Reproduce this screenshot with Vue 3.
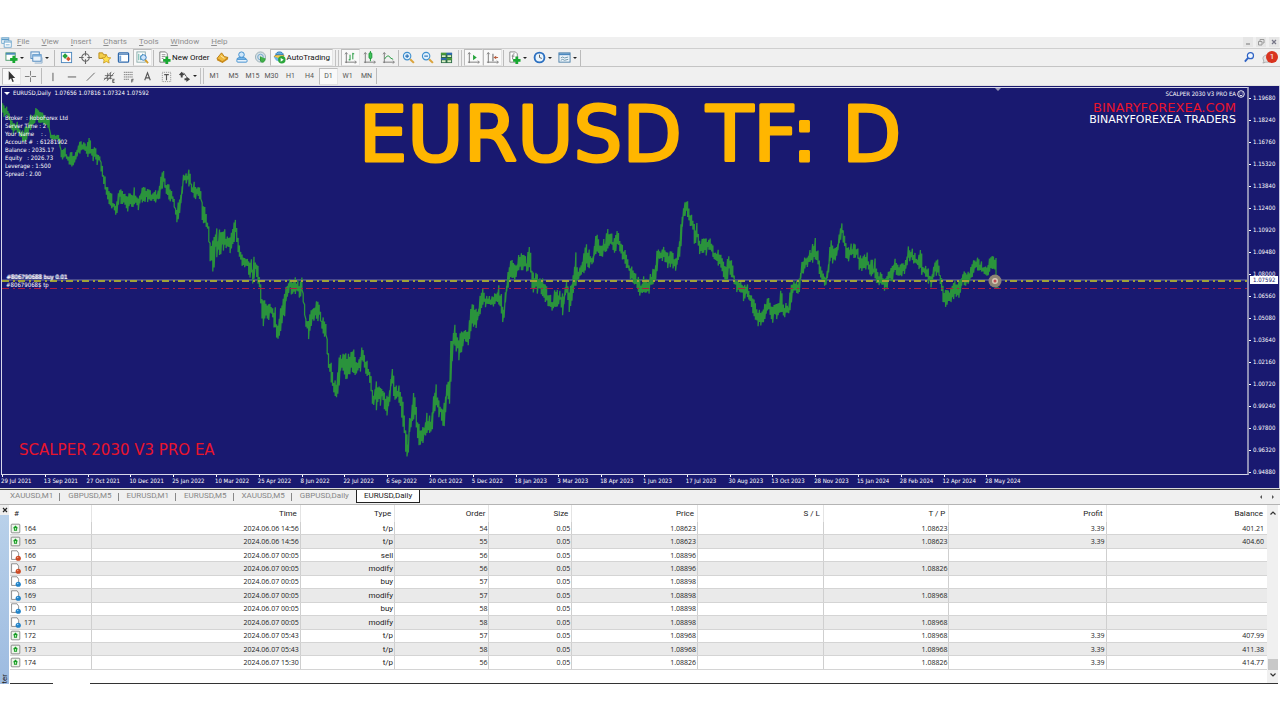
<script setup>
const icons = {
  appWindow: '<rect x="1" y="1" width="9" height="7" fill="#fff" stroke="#5b9bc8"/><path d="M1 3h9" stroke="#5b9bc8" stroke-width="2"/><rect x="4" y="5" width="9" height="8" fill="#fff" stroke="#5b9bc8"/><path d="M4 6.500h9M6 10h5" stroke="#5b9bc8"/>',
  addChart: '<rect x="1" y="2" width="10" height="8" fill="#fff" stroke="#4a9a6a"/><path d="M1 3h10" stroke="#4a8ab8" stroke-width="2"/><path d="M9.500 5v8M5.500 9h8" stroke="#19a832" stroke-width="3"/>',
  profiles: '<rect x="1" y="1" width="9" height="7" fill="#e8f2fb" stroke="#4b86bd"/><rect x="3" y="4" width="9" height="7" fill="#e8f2fb" stroke="#4b86bd"/><path d="M3 5h9" stroke="#7fb0dc" stroke-width="2"/><path d="M5 13h8V7" fill="none" stroke="#8fb0cf"/>',
  marketWatch: '<rect x="1.500" y="1.500" width="11" height="11" fill="#fdfdfd" stroke="#4b86bd"/><path d="M2.500 5.500l3-3 3 3-3 3z" fill="#2aa33c"/><path d="M6.500 8.500l2.500-2.500 2.500 2.500-2.500 2.500z" fill="#d9532c"/>',
  crosshair: '<circle cx="7" cy="7" r="4" fill="none" stroke="#666" stroke-width="1.200"/><path d="M7 0v5M7 9v5M0 7h5M9 7h5" stroke="#666" stroke-width="1.200"/>',
  folderStar: '<path d="M1 2h4l1 2h3v4H1z" fill="#f3cf4c" stroke="#b98a1c"/><path d="M9 4l1.500 3 3.300.400-2.400 2.200.600 3.400-3-1.700-3 1.700.600-3.400L4.200 7.400 7.500 7z" fill="#ffe14d" stroke="#c4921a" stroke-width=".8"/>',
  terminal: '<rect x="1.500" y="2" width="11" height="10" rx="1" fill="#fff" stroke="#2f69ac" stroke-width="1.300"/><path d="M2 3.500h10" stroke="#2f69ac" stroke-width="1"/><path d="M3.500 5v6" stroke="#6fa2d8" stroke-width="2"/>',
  tester: '<rect x="1" y="1" width="9" height="11" fill="#fff" stroke="#8aa"/><path d="M3 3v7M5 5v5M7 3v4" stroke="#5a9"/><circle cx="8" cy="7" r="3" fill="#cfe6fa" stroke="#2f79c0"/><path d="M10 9.500l3 3.500" stroke="#d59d2a" stroke-width="2"/>',
  newOrder: '<path d="M2 1h6l2 2v9H2z" fill="#fff" stroke="#777"/><path d="M4 4h4M4 6h4M4 8h2" stroke="#8a8a8a"/><path d="M9.500 6v8M5.500 10h8" stroke="#19a832" stroke-width="3"/>',
  metaEditor: '<path d="M1 8l5-6 3 4 4 1-6 5z" fill="#f0b93c" stroke="#b47a14"/><path d="M1 8l6 3 6-4v2l-6 4-6-3z" fill="#c98b1c"/><path d="M5 5l4 3" stroke="#fff3c0"/>',
  guru: '<circle cx="7" cy="4" r="3" fill="#cfe7fa" stroke="#3c8ccd"/><path d="M2 9c0-3 10-3 10 0z" fill="#8cc3ef" stroke="#3c8ccd"/><rect x="2" y="9" width="11" height="3" rx="1" fill="#e7f3fd" stroke="#3c8ccd"/>',
  signals: '<circle cx="7" cy="6.500" r="5.500" fill="#d5dfe4" stroke="#9bb0b8"/><circle cx="7" cy="6.500" r="3" fill="none" stroke="#6ea7d0"/><path d="M7 6v5c2 2 5 1 5-3" fill="#43b04a" stroke="#2c9838"/>',
  autoTrade: '<path d="M1 6l6-4 5 3-5 4z" fill="#f2c94c" stroke="#b98a1c"/><path d="M3 4c0-4 8-4 8 0z" fill="#65aee3" stroke="#2f79b5"/><path d="M1 6c1 4 3 5 6 5V8z" fill="#6db6e6"/><circle cx="9.500" cy="9.500" r="4" fill="#2ba63b"/><path d="M8.300 7.500v4l3.200-2z" fill="#fff"/>',
  bars: '<path d="M2.500 2v11M1 12h12" stroke="#777"/><path d="M1 3.500l1.500-2L4 3.500M11.500 10.500l2 1.500-2 1.500" fill="none" stroke="#777" stroke-width=".8"/><path d="M6.500 4v6M6.500 9.500H5M9.500 2v7M9.500 3H11" stroke="#189434"/>',
  candles: '<path d="M2.500 2v11M1 12h12" stroke="#777"/><path d="M1 3.500l1.500-2L4 3.500M11.500 10.500l2 1.500-2 1.500" fill="none" stroke="#777" stroke-width=".8"/><path d="M8 0v11" stroke="#189434"/><rect x="6.500" y="2" width="3" height="6" rx="1" fill="#42c35b" stroke="#189434"/>',
  line: '<path d="M2.500 2v11M1 12h12" stroke="#777"/><path d="M1 3.500l1.500-2L4 3.500M11.500 10.500l2 1.500-2 1.500" fill="none" stroke="#777" stroke-width=".8"/><path d="M3 8.500c2-4 5-4 6-1l3 1.500" fill="none" stroke="#189434"/>',
  zoomIn: '<circle cx="5.500" cy="5.500" r="4" fill="#dff0fc" stroke="#3f8fce" stroke-width="1.200"/><path d="M3.500 5.500h4M5.500 3.500v4" stroke="#2a6fb5" stroke-width="1.200"/><path d="M8.800 8.800l4 4" stroke="#dba43c" stroke-width="2.200"/>',
  zoomOut: '<circle cx="5.500" cy="5.500" r="4" fill="#dff0fc" stroke="#3f8fce" stroke-width="1.200"/><path d="M3.500 5.500h4" stroke="#2a6fb5" stroke-width="1.200"/><path d="M8.800 8.800l4 4" stroke="#dba43c" stroke-width="2.200"/>',
  tile: '<rect x="1" y="2" width="12" height="11" fill="#2c6a48"/><path d="M1 3h6M7 8.500h6" stroke="#4a9d38" stroke-width="2"/><path d="M7 3h6M1 8.500h6" stroke="#2d68b5" stroke-width="2"/><path d="M2 5.500h4M8 5.500h4M2 11h4M8 11h4" stroke="#d8f0c4" stroke-width="2"/>',
  autoScroll: '<path d="M2.500 2v11M1 12h12" stroke="#777"/><path d="M1 3.500l1.500-2L4 3.500M11.500 10.500l2 1.500-2 1.500" fill="none" stroke="#777" stroke-width=".8"/><path d="M6.500 4v6l4-3z" fill="#25a33b"/>',
  shift: '<path d="M2.500 2v11M1 12h12" stroke="#777"/><path d="M1 3.500l1.500-2L4 3.500M11.500 10.500l2 1.500-2 1.500" fill="none" stroke="#777" stroke-width=".8"/><path d="M7.500 3v8" stroke="#555"/><path d="M8 7l3-2v4z" fill="#b85a3a"/><path d="M10 7h3" stroke="#b85a3a"/>',
  indicators: '<path d="M2 1h6l2 2v9H2z" fill="#fff" stroke="#888"/><path d="M7 3c-2 0-2 1-2 6M4 5.500h3" fill="none" stroke="#777"/><path d="M9.500 6v8M5.500 10h8" stroke="#19a832" stroke-width="3"/>',
  clock: '<circle cx="7" cy="7" r="5.300" fill="#e8f4fd" stroke="#2a6fc0" stroke-width="2"/><path d="M7 4v3l2.500 1" fill="none" stroke="#555"/>',
  template: '<rect x="1" y="2" width="12" height="10" fill="#eef5fb" stroke="#4c7fa8"/><path d="M1 3.500h12" stroke="#4c88be" stroke-width="2"/><path d="M3 7.500l2-1 2 1 4-1M3 10l2-1 2 1 4-1" fill="none" stroke="#6a93a8"/>',
  cursor: '<path d="M4 1v10l2.500-2 1.500 4 1.500-.700L8 8.500h3z" fill="#333"/>',
  cross: '<path d="M7 1v5M7 8v5M1 7h5M8 7h5" stroke="#777"/>',
  vline: '<path d="M7.500 3v9" stroke="#555"/>',
  hline: '<path d="M3 7.500h9" stroke="#555"/>',
  trend: '<path d="M3 11.500L11.500 3" stroke="#666"/>',
  channel: '<path d="M1 11l8-9M4 12l8-9M2 6h9M1 9h9M5 3v8M8 3v7" stroke="#555" stroke-width=".8"/><path d="M12.500 10h-2v3.500h2M10.500 11.700h1.700" fill="none" stroke="#333" stroke-width=".8"/>',
  fibo: '<path d="M2 2.500h10M2 5h10M2 7.500h10M2 10h6" stroke="#777" stroke-dasharray="1.500 .5"/><path d="M12.500 10h-2v3.500M10.500 11.700h1.700" fill="none" stroke="#333" stroke-width=".8"/>',
  letter: '<path d="M4 11l3-8 3 8M5.200 8.500h3.600" fill="none" stroke="#555" stroke-width="1.200"/>',
  label: '<rect x="2.500" y="2.500" width="9" height="10" fill="none" stroke="#888" stroke-dasharray="1 1"/><path d="M4.500 5h5M7 5v6" stroke="#555" stroke-width="1.200"/>',
  arrows: '<path d="M1 5l3-3 3 3-2 1v2H3V6z" fill="#444"/><path d="M7 9h2V7l4 3-4 3v-2H7z" fill="#444"/><path d="M6 3l3 4" stroke="#444"/>',
  search: '<circle cx="8" cy="5" r="3.300" fill="#eef6ff" stroke="#2f63c4" stroke-width="1.300"/><path d="M5.500 7.500L2 11.500" stroke="#2f63c4" stroke-width="2"/>',
  up: '<rect x="1.500" y="1.500" width="11" height="11" rx="1" fill="#edf6ea" stroke="#777"/><path d="M7 3.200l3.500 3.500H9V10H5V6.700H3.500z" fill="#159c22"/><path d="M6.200 6.500h1.600v2H6.200z" fill="#d6f5d0"/>',
  sell: '<path d="M2 1h7l2 3v8H2z" fill="#fff" stroke="#777"/><circle cx="10.500" cy="10.500" r="3.300" fill="#cc4a24"/><circle cx="9.800" cy="9.500" r="1" fill="#f0a184"/>',
  buy: '<path d="M2 1h7l2 3v8H2z" fill="#fff" stroke="#777"/><circle cx="10.500" cy="10.500" r="3.300" fill="#2283c8"/><circle cx="9.800" cy="9.500" r="1" fill="#9ed3f5"/>',
}

const menus = ['File', 'View', 'Insert', 'Charts', 'Tools', 'Window', 'Help']

const mainTools = [
  { i: 'addChart', drop: true }, { i: 'profiles', drop: true }, { sep: 'wide' },
  { i: 'marketWatch' }, { i: 'crosshair' }, { i: 'folderStar' }, { i: 'terminal' }, { i: 'tester', on: true }, { sep: 'mid' },
  { i: 'newOrder', text: 'New Order' }, { i: 'metaEditor' }, { i: 'guru' }, { i: 'signals' },
  { i: 'autoTrade', text: 'AutoTrading', on: true }, { sep: 'grip' },
  { i: 'bars', on: true }, { i: 'candles' }, { i: 'line' }, { sep: 'thin' },
  { i: 'zoomIn' }, { i: 'zoomOut' }, { i: 'tile' }, { sep: 'grip' },
  { i: 'autoScroll', on: true }, { i: 'shift', on: true }, { sep: 'mid' },
  { i: 'indicators', drop: true }, { i: 'clock', drop: true }, { i: 'template', drop: true }, { sep: 'thin' },
]
const drawTools = [
  { i: 'cursor', on: true }, { i: 'cross' }, { sep: 'mid' },
  { i: 'vline' }, { i: 'hline' }, { i: 'trend' }, { i: 'channel' }, { i: 'fibo' }, { i: 'letter' }, { i: 'label' },
  { i: 'arrows', drop: true }, { sep: 'grip' },
]
const frames = ['M1', 'M5', 'M15', 'M30', 'H1', 'H4', 'D1', 'W1', 'MN']

const prices = ['1.19680', '1.18240', '1.16760', '1.15320', '1.13840', '1.12400', '1.10920', '1.09480', '1.08000', '1.06560', '1.05080', '1.03640', '1.02160', '1.00720', '0.99240', '0.97800', '0.96320', '0.94880']
const dates = ['29 Jul 2021', '13 Sep 2021', '27 Oct 2021', '10 Dec 2021', '25 Jan 2022', '10 Mar 2022', '25 Apr 2022', '8 Jun 2022', '22 Jul 2022', '6 Sep 2022', '20 Oct 2022', '5 Dec 2022', '18 Jan 2023', '3 Mar 2023', '18 Apr 2023', '1 Jun 2023', '17 Jul 2023', '30 Aug 2023', '13 Oct 2023', '28 Nov 2023', '15 Jan 2024', '28 Feb 2024', '12 Apr 2024', '28 May 2024']
const info = ['Broker  : RoboForex Ltd', 'Server Time : 2', 'Your Name    : .', 'Account #  : 61281902', 'Balance : 2035.17', 'Equity   : 2026.73', 'Leverage : 1:500', 'Spread : 2.00']

// Price envelope in thirds of a unit: x, high, low for each segment, plus the segment's origin.
const segments = [
  [0, 84, '8,65,95 20,70,95 28,85,110 35,110,145 45,115,140 55,120,150 62,140,165 72,140,172 80,125,165 90,100,140 100,95,115 110,66,105 120,85,115 135,90,120 148,105,140 152,152,162 178,158,168 184,195,220 195,195,225 205,215,238 215,210,240 222,215,240 230,195,215 240,178,210 250,180,200 260,185,215 268,165,215 275,190,220 290,200,235 300,205,240 305,240,275 315,280,315 322,310,350 330,310,365 338,345,375 345,360,392 352,345,380 358,305,355 370,325,355 380,325,375 395,335,365 405,315,378 415,330,370 430,315,345 445,320,350 460,325,350 475,325,355 482,285,325 490,260,295 497,290,320 510,315,345 520,335,360 530,370,425 538,345,395 545,320,350 550,265,300 560,268,300 568,255,300 575,295,335 590,300,340 603,310,350 608,340,430 615,370,410 622,400,440 630,450,520 636,500,565 646,430,520 655,450,510 668,420,490 680,450,500 695,455,500 707,395,450 715,450,500'],
  [240, 84, '0,490,530 10,510,545 25,515,565 38,540,590 48,508,570 57,570,600 65,630,690 68,660,718 78,655,710 88,645,710 98,665,705 106,680,745 112,730,773 120,690,740 128,655,710 136,630,680 142,595,630 150,585,620 158,578,625 168,590,625 178,595,640 187,582,630 192,640,690 197,690,740 205,700,768 213,660,720 222,655,715 230,660,700 238,655,705 246,700,750 258,715,765 263,780,830 268,830,865 275,840,900 282,880,935 289,900,953 296,830,905 303,808,860 312,808,860 322,820,888 332,815,870 340,800,860 350,830,875 360,820,860 367,766,840 374,795,850 380,835,870 388,845,895 394,885,930 400,925,975 410,890,965 420,900,955 430,905,960 438,940,990 446,920,975 452,880,930 458,840,905 463,905,950 472,915,945 480,910,960 487,950,1015 493,990,1060 498,1040,1130 505,1050,1140 508,1000,1070 515,970,1030 522,932,1000 528,970,1020 535,1020,1075 545,1030,1085 548,1045,1098 555,1000,1050 562,990,1035 572,1000,1062 580,950,1000 587,892,960 594,935,985 602,950,1010 610,990,1053 617,920,985 622,888,950 628,890,960 633,770,880 640,716,790 648,740,790 658,770,830 664,740,800 670,730,770 677,710,790 684,750,798 690,690,740 698,665,720 706,680,735 716,670,710 722,630,680 728,603,665 736,635,670 750,640,670 765,625,660 778,612,660 784,640,695 793,660,713 798,595,650 805,570,620 810,538,580 818,535,580 828,545,580 838,515,555 850,512,550 862,530,570 869,462,545 873,515,570 877,575,620 886,575,625 896,580,620 903,570,620 912,600,640 922,615,655 930,635,680 937,650,690 945,620,665 955,625,670'],
  [560, 84, '0,610,660 8,640,695 15,600,650 22,590,630 27,640,695 35,600,655 42,570,620 48,512,590 55,550,605 62,540,575 70,510,560 80,490,545 90,510,545 98,510,555 105,475,510 112,445,510 120,480,520 135,470,500 146,437,495 155,455,490 162,470,505 169,437,490 176,455,485 185,470,510 195,500,545 205,530,570 215,550,585 228,570,605 238,590,625 247,590,643 255,580,620 263,585,630 272,575,610 285,550,600 293,495,540 305,495,530 310,475,530 318,495,545 330,505,550 345,515,555 352,515,550 358,480,520 366,400,460 371,368,400 381,354,390 388,370,410 396,400,440 405,430,480 410,410,480 418,460,510 428,475,510 438,460,505 450,455,500 460,490,530 475,505,550 490,530,570 500,550,590 508,500,560 516,545,585 528,580,620 545,585,620 552,610,650 560,595,640 570,620,655 582,655,700 590,660,715 602,690,730 612,670,710 625,645,685 635,665,710 645,660,700 655,655,695 662,618,680 672,660,695 687,660,700 692,600,660 700,590,625 712,600,640 720,580,620 724,530,580 735,515,550 750,505,540 766,472,520 775,510,550 785,560,590 797,575,605 804,550,590 812,475,540 822,490,530 835,470,505'],
  [840, 180, '0,135,175 7,125,170 14,170,210 20,195,245 30,195,240 42,195,230 52,205,235 58,235,265 68,230,265 78,222,265 90,240,285 100,250,295 107,238,300 112,280,320 125,285,310 137,285,330 147,275,305 158,265,300 163,240,280 175,255,285 188,255,285 200,230,265 207,198,240 215,210,245 225,220,255 235,230,270 242,215,265 250,250,290 262,265,300 273,280,318 282,255,295 288,245,280 296,245,275 301,280,320 308,320,360 316,335,373 330,330,368 345,310,345 362,305,348 368,275,310 380,285,315 392,270,305 402,238,270 415,240,265 425,250,285 440,255,290 450,235,270 457,230,260 467,235,265 468,235,325'],
]
const env = segments.flatMap(([ox, oy, s]) => s.split(' ').map(p => {
  const [x, a, b] = p.split(',').map(Number)
  return [ox + x / 3, oy + a / 3, oy + b / 3]
}))
let seed = 7
const rnd = () => ((seed = (seed * 16807) % 2147483647) / 2147483647)
let series = ''
let k = 0
for (let x = env[0][0]; x < env[env.length - 1][0]; x += 1.33) {
  while (env[k + 1][0] < x) k++
  const [x0, a0, b0] = env[k], [x1, a1, b1] = env[k + 1]
  const t = (x - x0) / (x1 - x0 || 1)
  const a = a0 + (a1 - a0) * t, b = b0 + (b1 - b0) * t, r = b - a
  // A few bars reach past the envelope as spikes; most stay inside it.
  const hi = a + (rnd() * 0.6 - 0.15) * r - 1
  const lo = b - (rnd() * 0.6 - 0.15) * r + 1
  series += `${series ? 'L' : 'M'}${x.toFixed(1)} ${hi.toFixed(1)}V${lo.toFixed(1)}`
}
series += 'M996 258V288M996 288H999'

const tabs = ['XAUUSD,M1', 'GBPUSD,M5', 'EURUSD,M1', 'EURUSD,M5', 'XAUUSD,M5', 'GBPUSD,Daily', 'EURUSD,Daily']
const heads = ['#', 'Time', 'Type', 'Order', 'Size', 'Price', 'S / L', 'T / P', 'Profit', 'Balance']
const rows = [
  ['up', '164', '2024.06.06 14:56', 't/p', '54', '0.05', '1.08623', '', '1.08623', '3.39', '401.21'],
  ['up', '165', '2024.06.06 14:56', 't/p', '55', '0.05', '1.08623', '', '1.08623', '3.39', '404.60'],
  ['sell', '166', '2024.06.07 00:05', 'sell', '56', '0.05', '1.08896', '', '', '', ''],
  ['sell', '167', '2024.06.07 00:05', 'modify', '56', '0.05', '1.08896', '', '1.08826', '', ''],
  ['buy', '168', '2024.06.07 00:05', 'buy', '57', '0.05', '1.08898', '', '', '', ''],
  ['buy', '169', '2024.06.07 00:05', 'modify', '57', '0.05', '1.08898', '', '1.08968', '', ''],
  ['buy', '170', '2024.06.07 00:05', 'buy', '58', '0.05', '1.08898', '', '', '', ''],
  ['buy', '171', '2024.06.07 00:05', 'modify', '58', '0.05', '1.08898', '', '1.08968', '', ''],
  ['up', '172', '2024.06.07 05:43', 't/p', '57', '0.05', '1.08968', '', '1.08968', '3.39', '407.99'],
  ['up', '173', '2024.06.07 05:43', 't/p', '58', '0.05', '1.08968', '', '1.08968', '3.39', '411.38'],
  ['up', '174', '2024.06.07 15:30', 't/p', '56', '0.05', '1.08826', '', '1.08826', '3.39', '414.77'],
]
</script>

<template>
  <div class="app">
    <header class="menubar">
      <svg class="ico small" viewBox="0 0 14 14" v-html="icons.appWindow"></svg>
      <nav class="menus">
        <button v-for="m in menus" :key="m" class="menu"><u>{{ m[0] }}</u>{{ m.slice(1) }}</button>
      </nav>
      <div class="winbtns">
        <button aria-label="Minimize"><svg viewBox="0 0 8 8"><path d="M2 6h4" stroke="#777" /></svg></button>
        <button aria-label="Restore"><svg viewBox="0 0 8 8"><path d="M3 3V1.500h4V5H5.500M1.500 3.500H5V7H1.500z" fill="none" stroke="#999" /></svg></button>
        <button aria-label="Close"><svg viewBox="0 0 8 8"><path d="M2 2l4 4M6 2L2 6" stroke="#778" stroke-width="1.200" /></svg></button>
      </div>
    </header>

    <div class="toolbar">
      <template v-for="(t, n) in mainTools" :key="n">
        <span v-if="t.sep" class="sep" :class="t.sep"></span>
        <button v-else class="tool" :class="{ on: t.on, drop: t.drop, wide: t.text }" :aria-label="t.text || t.i">
          <svg class="ico" viewBox="0 0 14 14" v-html="icons[t.i]"></svg>
          <span v-if="t.text">{{ t.text }}</span>
          <i v-if="t.drop" class="caret"></i>
        </button>
      </template>
      <div class="right-tools">
        <button class="tool" aria-label="Search"><svg class="ico" viewBox="0 0 14 14" v-html="icons.search"></svg></button>
        <button class="tool chat" aria-label="Messages">
          <svg class="ico" viewBox="0 0 14 14"><path d="M1 8c0-5 10-5 10 0s-5 4-7 4l-3 1 1-2z" fill="#e2e2e2" stroke="#aaa" /></svg>
          <span class="badge">1</span>
        </button>
      </div>
    </div>

    <div class="toolbar second">
      <template v-for="(t, n) in drawTools" :key="n">
        <span v-if="t.sep" class="sep" :class="t.sep"></span>
        <button v-else class="tool" :class="{ on: t.on, drop: t.drop }" :aria-label="t.i">
          <svg class="ico" viewBox="0 0 14 14" v-html="icons[t.i]"></svg>
          <i v-if="t.drop" class="caret"></i>
        </button>
      </template>
      <button v-for="f in frames" :key="f" class="tool frame" :class="{ on: f === 'D1' }">{{ f }}</button>
      <span class="sep thin"></span>
    </div>

    <main class="chart">
      <section class="plot">
        <svg class="graph" viewBox="2 88 1245 386" preserveAspectRatio="none">
          <path d="M2 280H1248" stroke="#7478a6" />
          <path :d="series" fill="none" stroke="#2a933c" stroke-width="1.300" stroke-linejoin="bevel" />
          <path d="M2 281H1248" stroke="#a0a236" stroke-width="2" stroke-dasharray="7 4 2 3" />
          <path d="M2 288.500H1248" stroke="#b01c42" stroke-dasharray="7 4 2 3" />
          <path d="M995 88h6l-3 3z" fill="#9a9ab8" />
          <circle cx="995" cy="281" r="6.500" fill="#8d8474" />
          <circle cx="995" cy="281" r="3" fill="#d8c8b4" />
          <circle cx="995" cy="281" r="1.500" fill="#c04a50" />
        </svg>
        <div class="symbol"><i class="caret light"></i><span>EURUSD,Daily&nbsp; 1.07656 1.07816 1.07324 1.07592</span></div>
        <div class="info"><div v-for="l in info" :key="l">{{ l }}</div></div>
        <div class="orders"><div class="stack">#806790688 buy 0.01</div><div>#80679068$ tp</div></div>
        <svg class="title" viewBox="0 0 560 96"><text x="280" y="72" text-anchor="middle">EURUSD TF: D</text></svg>
        <div class="brand">
          <div class="ea">SCALPER 2030 V3 PRO EA
            <svg viewBox="0 0 8 8"><circle cx="4" cy="4" r="3.300" fill="none" stroke="#fff" stroke-width=".9" /><path d="M2.300 4.600c.5 1.500 2.900 1.500 3.400 0M2.800 2.500v1M5.200 2.500v1" fill="none" stroke="#fff" stroke-width=".9" /></svg>
          </div>
          <div class="site">BINARYFOREXEA.COM</div>
          <div class="traders">BINARYFOREXEA TRADERS</div>
        </div>
        <div class="ea-name">SCALPER 2030 V3 PRO EA</div>
      </section>
      <aside class="prices">
        <div v-for="p in prices" :key="p">{{ p }}</div>
        <span class="current">1.07592</span>
      </aside>
      <footer class="dates"><span v-for="d in dates" :key="d">{{ d }}</span></footer>
    </main>

    <nav class="tabs">
      <button v-for="(t, n) in tabs" :key="t" class="tab" :class="{ active: n === 6 }">{{ t }}</button>
      <span class="arrows"><svg viewBox="0 0 18 6"><path d="M4 1L2 3l2 2zM14 1l2 2-2 2z" fill="#555" /></svg></span>
    </nav>

    <section class="terminal">
      <div class="side">
        <button aria-label="Close terminal"><svg viewBox="0 0 6 6"><path d="M1 1l4 4M5 1L1 5" stroke="#222" stroke-width="1.200" /></svg></button>
        <div class="strip"><span>ter</span></div>
      </div>
      <div class="body">
        <table>
          <colgroup><col v-for="n in 10" :key="n" :class="'c' + n"></colgroup>
          <thead><tr><th v-for="h in heads" :key="h">{{ h }}</th></tr></thead>
          <tbody>
            <tr v-for="r in rows" :key="r[1]">
              <td><div class="num"><svg viewBox="0 0 14 14" v-html="icons[r[0]]"></svg>{{ r[1] }}</div></td>
              <td v-for="(c, n) in r.slice(2)" :key="n" :class="{ word: n === 1 }">{{ c }}</td>
            </tr>
          </tbody>
        </table>
        <div class="bottom"><span class="first"></span><span class="rest"></span></div>
      </div>
      <div class="scroll">
        <svg viewBox="0 0 8 6"><path d="M1.500 4.500L4 2l2.500 2.500" fill="none" stroke="#333" stroke-width="1.200" /></svg>
        <span class="thumb"></span>
        <svg viewBox="0 0 8 6"><path d="M1.500 1.500L4 4l2.500-2.500" fill="none" stroke="#333" stroke-width="1.200" /></svg>
      </div>
    </section>
  </div>
</template>

<style>
body { background: #fff; }
</style>

<style scoped>
.app { padding-top: 37px; font: 8px/12px Roboto, "Open Sans", sans-serif; color: #222; }
.app * { box-sizing: border-box; }
button { padding: 0; border: 0; background: none; font: inherit; color: inherit; }
svg { display: block; flex: none; }
.menubar { display: flex; align-items: center; height: 12px; background: #f0f0f0; border-bottom: 1px solid #cfcfcf; padding: 0 1px 1px; }
.ico { width: 13px; height: 13px; }
.ico.small { width: 11px; height: 11px; }
.menus { display: flex; gap: 12px; padding-left: 5px; flex: 1; color: #8e8e8e; }
.menu { line-height: 10px; }
.winbtns { display: flex; gap: 3px; }
.winbtns button { width: 10px; height: 10px; background: #e6e6e6; display: grid; place-items: center; }
.winbtns svg { width: 8px; height: 8px; }
.toolbar { display: flex; align-items: center; height: 18px; padding-left: 2px; background: #f0f0f0; border-bottom: 1px solid #c4c4c4; }
.toolbar.second { height: 19px; border-bottom: 1px solid #e2e2e2; }
.tool { width: 19px; height: 17px; display: flex; align-items: center; justify-content: center; border: 1px solid transparent; color: #111; }
.tool.drop { width: 25px; gap: 2px; }
.second .tool.drop { width: 23px; }
.tool.wide { width: auto; padding: 0 2px; gap: 1px; }
.tool.on { background: #f9f9f9; border-color: #bdbdbd #e4e4e4 #e4e4e4 #bdbdbd; }
.tool.frame { font-size: 7px; color: #555; }
.caret { border: 2px solid transparent; border-top-color: #222; border-bottom: 0; flex: none; }
.caret.light { border-width: 3px 3px 0; border-top-color: #fff; }
.sep { width: 5px; height: 16px; background: linear-gradient(#bbb, #bbb) center / 1px 100% no-repeat; }
.sep.mid { width: 3px; }
.sep.thin { width: 1px; }
.sep.grip { background: none; border: solid #c2c2c2; border-width: 0 1px; width: 4px; margin: 0 2px; }
.second .sep.grip { margin: 0 1px; }
.right-tools { margin-left: auto; display: flex; padding-right: 2px; }
.chat { position: relative; }
.badge { position: absolute; right: -1px; top: 1px; width: 12px; height: 12px; border-radius: 50%; background: #d8331f; color: #fff; line-height: 12px; text-align: center; }
.chart { display: grid; grid-template-columns: 1fr 30px; grid-template-rows: 388px 13px; background: #191970; color: #fff; border-bottom: 1px solid #dadada; border-right: 1px solid #c4c4dc; font: 6px/8px "DejaVu Sans Condensed", "DejaVu Sans", sans-serif; padding-left: 1px; padding-top: 1px; }
.plot { position: relative; border: 1px solid #d8d8ea; border-right: 2px solid #8d8db4; }
.graph { width: 100%; height: 100%; }
.symbol { position: absolute; left: 2px; top: 1px; display: flex; align-items: center; gap: 3px; }
.info { position: absolute; left: 3px; top: 26px; white-space: pre; }
.orders { position: absolute; left: 4px; top: 185px; white-space: pre; }
.stack { text-shadow: 1px 0 #fff; }
.title { position: absolute; left: 50%; top: 1px; width: 560px; height: 96px; margin-left: -275px; overflow: visible; }
.title text { font: 400 77px "DejaVu Sans", sans-serif; fill: #ffb600; stroke: #ffb600; stroke-width: 3px; stroke-linejoin: round; }
.brand { position: absolute; right: 11px; top: 1px; text-align: right; font-family: "DejaVu Sans", sans-serif; }
.ea { display: flex; align-items: center; justify-content: flex-end; gap: 1px; margin-right: -9px; font-family: "DejaVu Sans Condensed", sans-serif; line-height: 10px; }
.ea svg { width: 8px; height: 8px; }
.site { color: #e8142c; font-size: 13px; line-height: 13px; margin-top: 2px; }
.traders { font-size: 11px; line-height: 11px; }
.ea-name { position: absolute; left: 17px; bottom: 14px; color: #e8142c; font: 15px/20px "DejaVu Sans", sans-serif; }
.prices { position: relative; grid-row: 1 / 3; grid-column: 2; }
.prices div { height: 22px; line-height: 22px; padding-left: 4px; background: linear-gradient(#fff, #fff) left center / 2px 1px no-repeat; }
.current { position: absolute; left: 1px; right: 1px; top: 189px; height: 8px; padding-left: 3px; background: #fff; color: #191970; }
.dates { display: flex; grid-row: 2; grid-column: 1; }
.dates span { flex: 0 0 3.43%; white-space: nowrap; line-height: 10px; padding-top: 1px; background: linear-gradient(#fff, #fff) 1px 0 / 1px 2px no-repeat; }
.tabs { display: flex; align-items: stretch; height: 16px; padding-left: 2px; background: #f0f0f0; border-top: 1px solid #444; border-bottom: 1px solid #b4b4b4; color: #868686; }
.tab { padding: 0 7px 2px 8px; line-height: 12px; background: linear-gradient(#888, #888) right 3px / 1px 8px no-repeat; }
.tab:nth-child(6) { background: none; }
.tab.active { height: 13px; padding: 0 7px; line-height: 12px; background: #fff; color: #222; border: 1px solid #222; border-top: 0; }
.arrows { margin-left: auto; align-self: center; padding-right: 4px; }
.arrows svg { width: 18px; height: 6px; }
.terminal { display: flex; height: 179px; }
.side { width: 9px; display: flex; flex-direction: column; background: #eee; margin-right: 1px; }
.side button { height: 10px; display: grid; place-items: center; }
.side button svg { width: 6px; height: 6px; }
.strip { flex: 1; background: linear-gradient(#b9d1ea, #9dbbe0); display: flex; align-items: flex-end; }
.strip span { writing-mode: vertical-rl; transform: rotate(180deg); line-height: 9px; }
.body { flex: 1; display: flex; flex-direction: column; justify-content: space-between; }
table { width: 100%; height: 165px; border-collapse: collapse; table-layout: fixed; }
.c1 { width: 6.500%; } .c2 { width: 16.600%; } .c3, .c4 { width: 7.500%; } .c5 { width: 6.600%; }
.c6, .c7, .c8 { width: 10%; } .c9 { width: 12.500%; } .c10 { width: 12.800%; }
th { height: 17px; padding: 0 3px 0 0; text-align: right; font-weight: 400; border-right: 1px solid #e4e4e4; }
th:first-child { text-align: left; padding-left: 4px; }
td { padding: 0 1px 0 0; font: 7px/11px "Open Sans", sans-serif; text-align: right; border-right: 1px solid #cfcfcf; border-bottom: 1px solid #d4d4d4; }
td.word { font: 8px/11px Roboto, sans-serif; }
th:last-child, td:last-child { border-right: 0; }
td:last-child { padding-right: 3px; }
th:last-child { padding-right: 4px; }
tbody tr:nth-child(even) { background: #eaeaea; }
.num { display: flex; align-items: center; gap: 3px; }
.num svg { width: 11px; height: 11px; }
.bottom { display: flex; justify-content: space-between; gap: 37px; }
.bottom span { border-top: 1px solid #333; }
.first { width: 43px; }
.rest { flex: 1; margin-right: -11px; }
.scroll { width: 11px; margin-right: 2px; padding: 5px 0 5px; display: flex; flex-direction: column; align-items: center; background: #f0f0f0; margin-bottom: 1px; }
.scroll svg { width: 8px; height: 6px; }
.thumb { width: 10px; height: 11px; background: #c8c8c8; margin: auto 0 2px; }
</style>
